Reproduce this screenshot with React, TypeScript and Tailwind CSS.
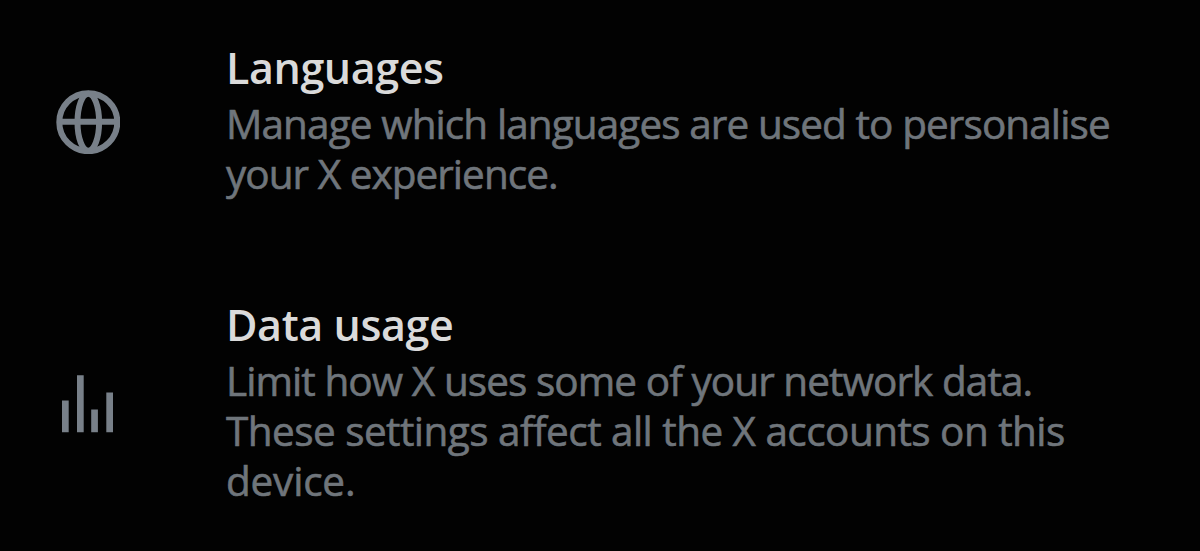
import type { ReactNode } from 'react'

type Line = { text: string; className: string }

type SettingsItem = {
  id: string
  title: Line
  lines: Line[]
  icon: ReactNode
}

function GlobeIcon() {
  return (
    <svg viewBox="0 0 64 64" className="size-16" fill="none" stroke="currentColor" strokeWidth="6" aria-hidden>
      <circle cx="32.3" cy="32.2" r="29" />
      <ellipse cx="32.3" cy="32.2" rx="10.8" ry="28.5" />
      <path d="M3 31.7h58" />
    </svg>
  )
}

function BarsIcon() {
  return (
    <svg viewBox="0 0 64 64" className="size-16" fill="currentColor" aria-hidden>
      <path d="M6 28.5h6.7v31.7H6zM21 3.3h6.7v56.9H21zM35.2 37.4h6.7v22.8h-6.7zM50.3 20.4H57v39.8h-6.7z" />
    </svg>
  )
}

const items: SettingsItem[] = [
  {
    id: 'languages',
    title: { text: 'Languages', className: 'tracking-[-0.4px]' },
    lines: [
      { text: 'Manage which languages are used to personalise', className: 'tracking-[-0.91px]' },
      { text: 'your X experience.', className: 'tracking-[-0.97px]' },
    ],
    icon: <GlobeIcon />,
  },
  {
    id: 'data-usage',
    title: { text: 'Data usage', className: 'tracking-[-0.4px]' },
    lines: [
      { text: 'Limit how X uses some of your network data.', className: 'tracking-[-0.93px]' },
      { text: 'These settings affect all the X accounts on this', className: 'tracking-[-0.55px]' },
      { text: 'device.', className: 'tracking-[-0.2px]' },
    ],
    icon: <BarsIcon />,
  },
]

function SettingsRow({ item }: { item: SettingsItem }) {
  return (
    <div className="flex items-center gap-[106px]">
      <div className="shrink-0 pt-0.5 text-[#788089]">{item.icon}</div>
      <div className="whitespace-nowrap">
        <h2 className="text-[43px] font-semibold leading-[50px] text-[#dadada]">
          <span className={item.title.className}>{item.title.text}</span>
        </h2>
        <p className="mt-1.5 text-[40.5px] leading-[50px] text-[#6f757b] [-webkit-text-stroke:0.6px_#6f757b]">
          {item.lines.map((line) => (
            <span key={line.text} className={`block ${line.className}`}>
              {line.text}
            </span>
          ))}
        </p>
      </div>
    </div>
  )
}

export default function App() {
  return (
    <main className="flex h-[551px] w-[1200px] flex-col gap-[101px] overflow-hidden bg-[#020202] pl-14 pt-[43px] font-['Open_Sans',sans-serif]">
      {items.map((item) => (
        <SettingsRow key={item.id} item={item} />
      ))}
    </main>
  )
}
